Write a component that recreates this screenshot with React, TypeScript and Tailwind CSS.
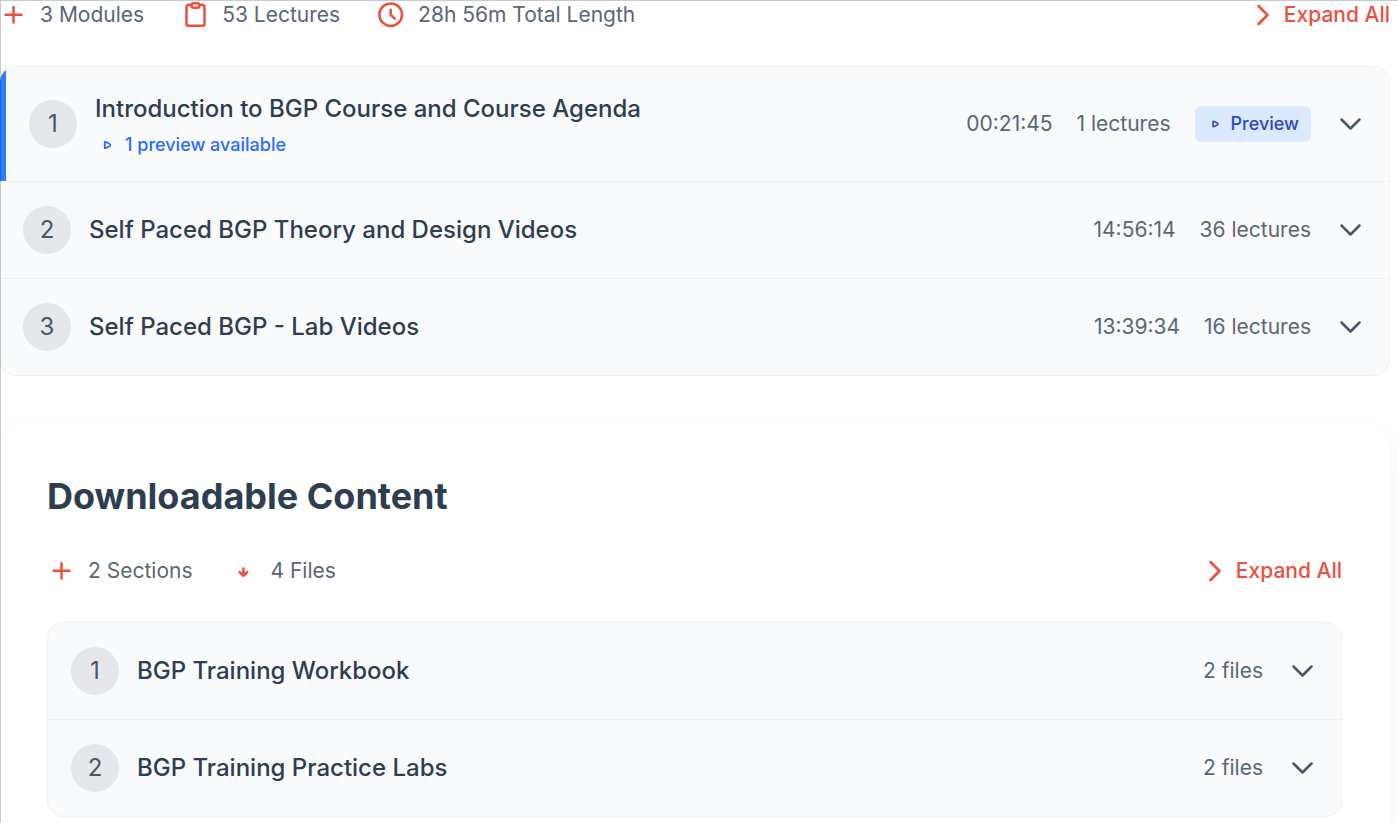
import type { ReactNode } from 'react';

type Item = {
    id: number;
    title: string;
    duration?: string;
    count: string;
    preview?: string;
};

const modules: Item[] = [
    { id: 1, title: 'Introduction to BGP Course and Course Agenda', duration: '00:21:45', count: '1 lectures', preview: '1 preview available' },
    { id: 2, title: 'Self Paced BGP Theory and Design Videos', duration: '14:56:14', count: '36 lectures' },
    { id: 3, title: 'Self Paced BGP - Lab Videos', duration: '13:39:34', count: '16 lectures' },
];

const downloads: Item[] = [
    { id: 1, title: 'BGP Training Workbook', count: '2 files' },
    { id: 2, title: 'BGP Training Practice Labs', count: '2 files' },
];

const Icon = ({ className, children }: { className: string; children: ReactNode }) => (
    <svg
        viewBox="0 0 28 28"
        fill="none"
        stroke="currentColor"
        strokeWidth="2.5"
        strokeLinecap="round"
        strokeLinejoin="round"
        aria-hidden="true"
        className={`shrink-0 ${className}`}
    >
        {children}
    </svg>
);

const PlusIcon = () => (
    <Icon className="w-7 h-7 text-[#ed4f3f]">
        <path d="M14.5 6v15.5M6.5 13.7h16" />
    </Icon>
);

const ClipboardIcon = () => (
    <Icon className="w-7 h-7 text-[#ed4f3f]">
        <path d="M10.5 3.7H8a2.5 2.5 0 0 0-2.5 2.5v16.5a2 2 0 0 0 2 2h14a2 2 0 0 0 2-2V6.2a2.5 2.5 0 0 0-2.5-2.5h-2.5" />
        <rect x="10.5" y="2.2" width="8" height="4.6" rx="2.3" />
    </Icon>
);

const ClockIcon = () => (
    <Icon className="w-7 h-7 text-[#ed4f3f]">
        <circle cx="13.7" cy="13.7" r="11.3" />
        <path d="M13.7 8.7v5l4 4" />
    </Icon>
);

const DownIcon = () => (
    <Icon className="w-7 h-7 text-[#ed4f3f]">
        <path d="M14.4 11.4v7M10.6 15.2l3.8 3.7 3.8-3.7" />
    </Icon>
);

const PlayIcon = ({ className }: { className: string }) => (
    <svg viewBox="0 0 16 16" fill="none" stroke="currentColor" strokeWidth="1.8" strokeLinejoin="round" aria-hidden="true" className={`shrink-0 ${className}`}>
        <path d="M5.8 4.8v6.4c1 0 5.7-2 5.7-3.2s-4.7-3.2-5.7-3.2z" />
    </svg>
);

const ExpandButton = () => (
    <button type="button" className="flex items-center gap-3 text-[21px] leading-7 font-medium text-[#ed4f3f]">
        <svg viewBox="0 0 16 24" fill="none" stroke="currentColor" strokeWidth="2.6" strokeLinecap="round" strokeLinejoin="round" aria-hidden="true" className="w-4 h-6">
            <path d="M2.5 3l9 9-9 9" />
        </svg>
        Expand All
    </button>
);

const Stat = ({ icon, label }: { icon: ReactNode; label: string }) => (
    <div className="flex items-center gap-[13px]">
        {icon}
        <span>{label}</span>
    </div>
);

const Row = ({ item }: { item: Item }) => (
    <li className="border-b border-[#f0f1f3] last:border-b-0">
        <button
            type="button"
            className={`w-full flex items-center justify-between pl-[23px] pr-[25px] text-left ${item.preview ? 'border-l-[6px] border-[#2b7fff] h-[114px]' : 'h-24'}`}
        >
            <span className="flex items-center gap-[18px]">
                <span className="w-12 h-12 shrink-0 rounded-full bg-[#e5e7eb] flex items-center justify-center text-2xl text-[#4a5565]">
                    {item.id}
                </span>
                <span className={`flex flex-col ${item.preview ? 'pt-1.5' : ''}`}>
                    <span className="text-2xl leading-9 font-medium text-[#2c3e50]">{item.title}</span>
                    {item.preview && (
                        <span className="flex items-center gap-2.5 pl-1 text-lg leading-9 font-medium text-[#2b6bff]">
                            <PlayIcon className="w-4 h-4" />
                            {item.preview}
                        </span>
                    )}
                </span>
            </span>
            <span className="flex items-center gap-[25px] text-[21px] text-[#5a6675]">
                <span className="flex items-center gap-6">
                    {item.duration && <span>{item.duration}</span>}
                    <span>{item.count}</span>
                    {item.preview && (
                        <span className="flex items-center gap-2 h-9 px-3 rounded-md bg-[#dbeafe] text-lg font-medium text-[#2f49c4]">
                            <PlayIcon className="w-4 h-3.5" />
                            Preview
                        </span>
                    )}
                </span>
                <Icon className="w-7 h-7 text-[#4a5565]">
                    <path d="M5.5 9.5l9 9 9-9" />
                </Icon>
            </span>
        </button>
    </li>
);

const List = ({ items }: { items: Item[] }) => (
    <ul className="mt-[37px] overflow-hidden rounded-2xl border border-[#f0f1f3] bg-[#f9fafc]">
        {items.map((item) => (
            <Row key={item.id} item={item} />
        ))}
    </ul>
);

const App = () => {
    return (
        <div className="relative min-h-screen overflow-hidden bg-white pr-2 font-['Inter',sans-serif]">
            <div className="absolute inset-0 z-10 border-t border-l border-black/20 pointer-events-none" />

            <main className="-ml-px pt-px">
                <section>
                    <div className="flex items-center justify-between text-[21px] leading-7 text-[#5a6675]">
                        <div className="flex items-center gap-[37px]">
                            <Stat icon={<PlusIcon />} label="3 Modules" />
                            <Stat icon={<ClipboardIcon />} label="53 Lectures" />
                            <Stat icon={<ClockIcon />} label="28h 56m Total Length" />
                        </div>
                        <ExpandButton />
                    </div>
                    <List items={modules} />
                </section>

                <section className="mt-12 rounded-3xl bg-white p-12 shadow-[0_10px_24px_rgba(0,0,0,0.05)]">
                    <h2 className="text-4xl leading-[48px] font-bold text-[#2c3e50]">Downloadable Content</h2>
                    <div className="mt-[37px] flex items-center justify-between text-[21px] leading-7 text-[#5a6675]">
                        <div className="flex items-center gap-[37px]">
                            <Stat icon={<PlusIcon />} label="2 Sections" />
                            <Stat icon={<DownIcon />} label="4 Files" />
                        </div>
                        <ExpandButton />
                    </div>
                    <List items={downloads} />
                </section>
            </main>
        </div>
    );
};

export default App;
